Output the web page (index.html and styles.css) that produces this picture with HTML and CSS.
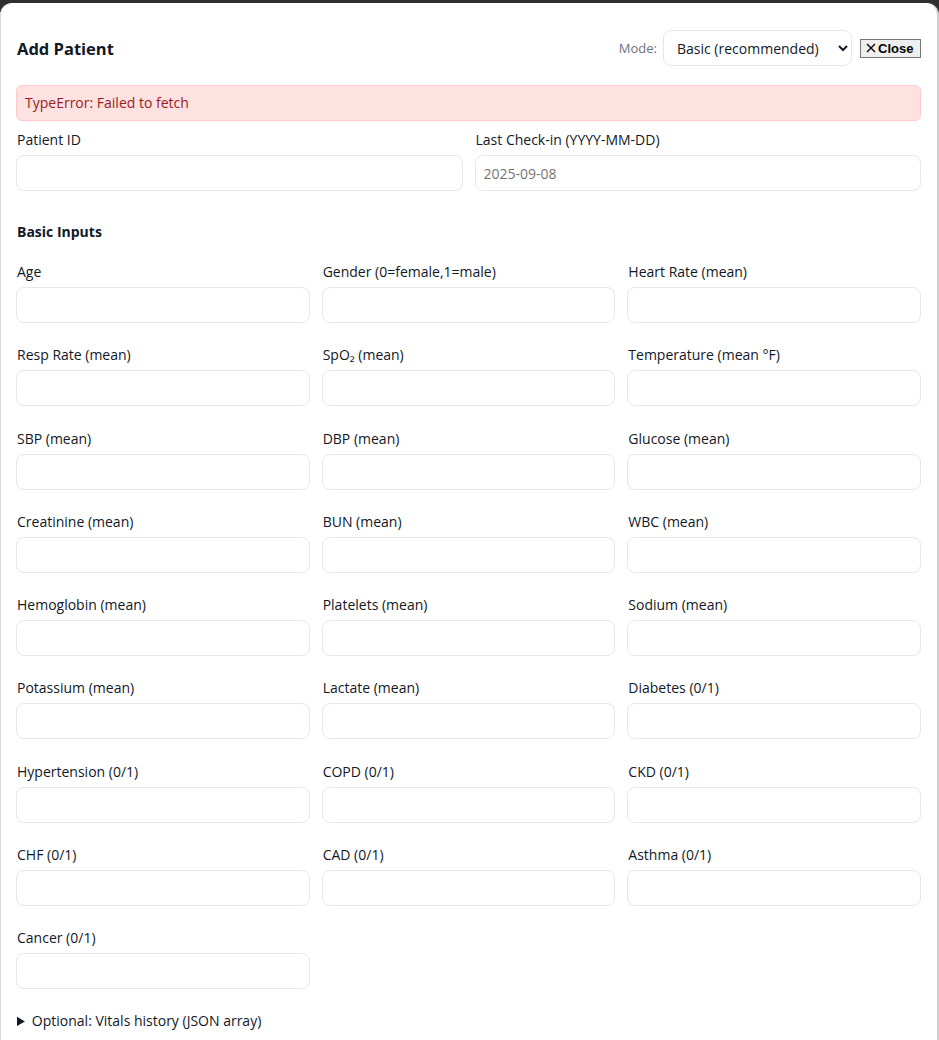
FILE: index.html
```html
<!DOCTYPE html>
<html lang="en">
<head>
<meta charset="utf-8">
<title>Add Patient</title>
<link rel="stylesheet" href="styles.css">
</head>
<body>
<div class="modal">
  <div class="header">
    <h2 class="title">Add Patient</h2>
    <div class="header-right">
      <span class="mode-label">Mode:</span>
      <select class="mode-select">
        <option>Basic (recommended)</option>
        <option>Advanced</option>
      </select>
      <button class="close-btn"><svg class="x-icon" width="10" height="10" viewBox="0 0 10 10"><path d="M1 1 L9 9 M9 1 L1 9" stroke="#000" stroke-width="1.3" fill="none"/></svg>Close</button>
    </div>
  </div>
  <div class="error">TypeError: Failed to fetch</div>
  <div class="grid2">
    <div class="field"><label class="lbl">Patient ID</label><input class="inp" type="text"></div>
    <div class="field"><label class="lbl">Last Check-in (YYYY-MM-DD)</label><input class="inp" type="text" placeholder="2025-09-08"></div>
  </div>
  <h3 class="section">Basic Inputs</h3>
  <div class="grid3">
    <div class="field"><label class="lbl">Age</label><input class="inp" type="text"></div>
    <div class="field"><label class="lbl">Gender (0=female,1=male)</label><input class="inp" type="text"></div>
    <div class="field"><label class="lbl">Heart Rate (mean)</label><input class="inp" type="text"></div>
    <div class="field"><label class="lbl">Resp Rate (mean)</label><input class="inp" type="text"></div>
    <div class="field"><label class="lbl">SpO₂ (mean)</label><input class="inp" type="text"></div>
    <div class="field"><label class="lbl">Temperature (mean °F)</label><input class="inp" type="text"></div>
    <div class="field"><label class="lbl">SBP (mean)</label><input class="inp" type="text"></div>
    <div class="field"><label class="lbl">DBP (mean)</label><input class="inp" type="text"></div>
    <div class="field"><label class="lbl">Glucose (mean)</label><input class="inp" type="text"></div>
    <div class="field"><label class="lbl">Creatinine (mean)</label><input class="inp" type="text"></div>
    <div class="field"><label class="lbl">BUN (mean)</label><input class="inp" type="text"></div>
    <div class="field"><label class="lbl">WBC (mean)</label><input class="inp" type="text"></div>
    <div class="field"><label class="lbl">Hemoglobin (mean)</label><input class="inp" type="text"></div>
    <div class="field"><label class="lbl">Platelets (mean)</label><input class="inp" type="text"></div>
    <div class="field"><label class="lbl">Sodium (mean)</label><input class="inp" type="text"></div>
    <div class="field"><label class="lbl">Potassium (mean)</label><input class="inp" type="text"></div>
    <div class="field"><label class="lbl">Lactate (mean)</label><input class="inp" type="text"></div>
    <div class="field"><label class="lbl">Diabetes (0/1)</label><input class="inp" type="text"></div>
    <div class="field"><label class="lbl">Hypertension (0/1)</label><input class="inp" type="text"></div>
    <div class="field"><label class="lbl">COPD (0/1)</label><input class="inp" type="text"></div>
    <div class="field"><label class="lbl">CKD (0/1)</label><input class="inp" type="text"></div>
    <div class="field"><label class="lbl">CHF (0/1)</label><input class="inp" type="text"></div>
    <div class="field"><label class="lbl">CAD (0/1)</label><input class="inp" type="text"></div>
    <div class="field"><label class="lbl">Asthma (0/1)</label><input class="inp" type="text"></div>
    <div class="field"><label class="lbl">Cancer (0/1)</label><input class="inp" type="text"></div>
  </div>
  <details class="opt">
    <summary>Optional: Vitals history (JSON array)</summary>
  </details>
</div>
</body>
</html>
```

FILE: styles.css
```css
html, body {
  margin: 0;
  padding: 0;
}
body {
  background: #2f2f2f;
  font-family: "Open Sans", "Noto Sans", sans-serif;
  color: #111827;
  height: 1040px;
  overflow: hidden;
}
.modal {
  margin: 3px 0 0 0;
  background: #fff;
  border-radius: 12px 12px 0 0;
  border-left: 1px solid #d9d9d9;
  border-right: 2px solid #cfcfcf;
  padding: 27px 16px 40px 15px;
  height: 1100px;
  box-sizing: border-box;
}
.header {
  display: flex;
  align-items: center;
  justify-content: space-between;
  margin-bottom: 19px;
}
.title {
  margin: 1px 0 0 1px;
  font-size: 16.5px;
  font-weight: 700;
  line-height: 24px;
  color: #111827;
}
.header-right {
  display: flex;
  align-items: center;
}
.mode-label {
  font-size: 13px;
  color: #6b7280;
  margin-right: 6px;
}
.mode-select {
  height: 36px;
  width: 189px;
  border: 1px solid #e5e7eb;
  border-radius: 8px;
  background: #fff;
  font-family: inherit;
  font-size: 14px;
  color: #111827;
  padding: 0 6px 0 9px;
  margin-right: 8px;
}
.close-btn {
  display: inline-flex;
  align-items: center;
  font-family: "Liberation Sans", Arial, sans-serif;
  font-weight: 700;
  font-size: 13px;
  padding: 0 4px 0 5px;
  height: 19px;
  width: 61px;
  line-height: 15px;
  background: #efefef;
  border: 1px solid #767676;
  border-radius: 0;
  color: #000;
}
.x-icon {
  margin-right: 2px;
  flex: none;
}
.error {
  background: #fee2e2;
  border: 1px solid #fecaca;
  border-radius: 6px;
  color: #991b1b;
  font-size: 14px;
  line-height: 20px;
  padding: 7px 8px 7px 8px;
}
.grid2 {
  display: grid;
  grid-template-columns: 1fr 1fr;
  column-gap: 12px;
  margin-top: 9px;
}
.grid3 {
  display: grid;
  grid-template-columns: 1fr 1fr 1fr;
  column-gap: 12px;
  row-gap: 22.3px;
}
.field {
  display: flex;
  flex-direction: column;
}
.lbl {
  font-size: 14px;
  line-height: 20px;
  margin: 0 0 5px 1px;
  color: #111827;
}
.inp {
  height: 36px;
  box-sizing: border-box;
  border: 1px solid #e5e7eb;
  border-radius: 8px;
  padding: 0 8px;
  font-family: inherit;
  font-size: 14px;
  color: #111827;
  outline: none;
}
.inp::placeholder {
  color: #757575;
}
.section {
  font-size: 14px;
  font-weight: 700;
  line-height: 20px;
  margin: 31px 0 20px 1px;
}
.opt {
  margin-top: 22px;
  margin-left: 1px;
  font-size: 14px;
  line-height: 20px;
}
.opt summary {
  cursor: pointer;
}
```
